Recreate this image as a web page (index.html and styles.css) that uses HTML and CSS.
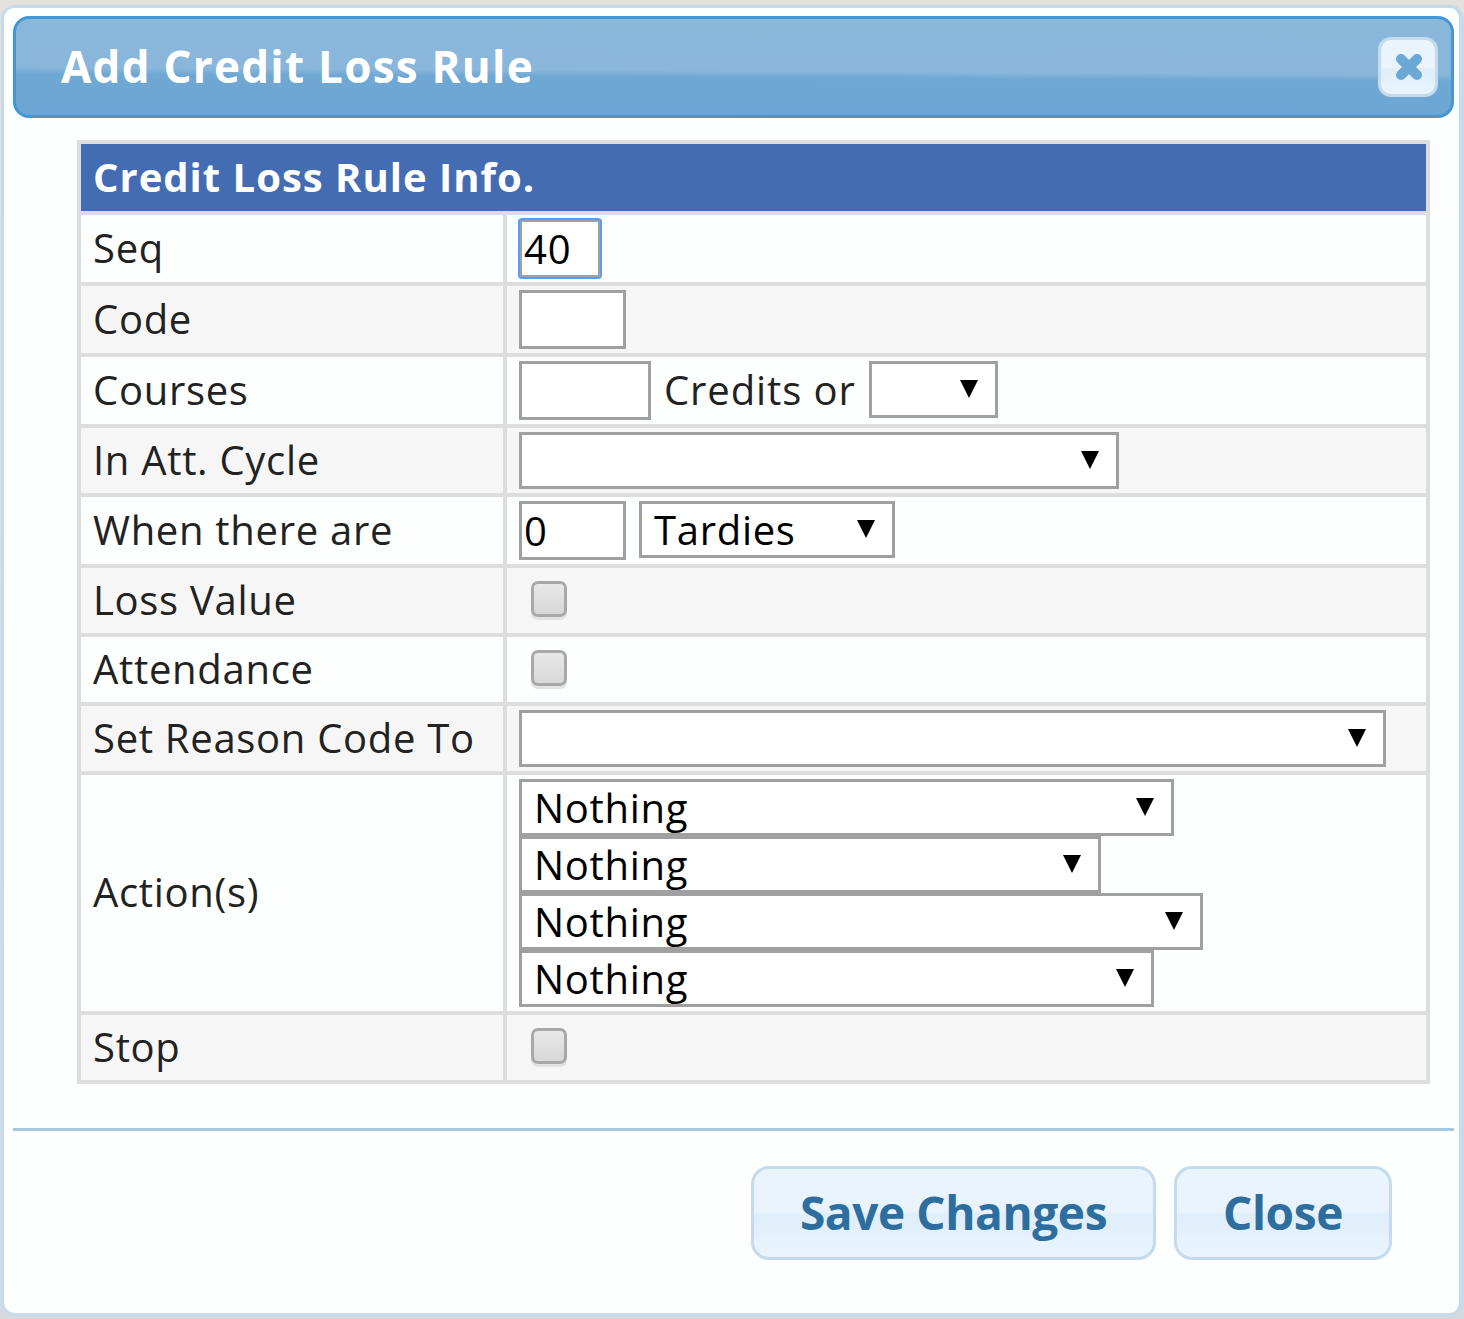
FILE: index.html
```html
<!DOCTYPE html>
<html lang="en">
<head>
    <meta charset="UTF-8">
    <meta name="viewport" content="width=device-width, initial-scale=1.0">
    <title>Add Credit Loss Rule</title>
    <link rel="stylesheet" href="styles.css">
</head>
<body>
    <div class="dialog">
        <header class="titlebar">
            <h1>Add Credit Loss Rule</h1>
            <button class="close-x" aria-label="Close">
                <svg viewBox="0 0 30 30" width="30" height="30">
                    <path d="M7 7 L23 23 M23 7 L7 23" stroke="#6ba8d6" stroke-width="10" stroke-linecap="round"/>
                </svg>
            </button>
        </header>
        <main class="content">
            <table class="rule-table">
                <thead>
                    <tr><th colspan="2">Credit Loss Rule Info.</th></tr>
                </thead>
                <tbody>
                    <tr class="row-tall">
                        <td class="label">Seq</td>
                        <td><input class="field focused w-seq" type="text" value="40"></td>
                    </tr>
                    <tr class="row-tall">
                        <td class="label">Code</td>
                        <td><input class="field w-code" type="text"></td>
                    </tr>
                    <tr class="row-tall">
                        <td class="label">Courses</td>
                        <td>
                            <div class="inline">
                                <input class="field w-courses" type="text">
                                <span class="inline-text">Credits or</span>
                                <select class="pick w-credits"><option></option></select>
                            </div>
                        </td>
                    </tr>
                    <tr class="row-short">
                        <td class="label">In Att. Cycle</td>
                        <td><select class="pick w-cycle"><option></option></select></td>
                    </tr>
                    <tr class="row-tall">
                        <td class="label">When there are</td>
                        <td>
                            <div class="inline">
                                <input class="field w-code" type="text" value="0">
                                <select class="pick w-tardies"><option>Tardies</option></select>
                            </div>
                        </td>
                    </tr>
                    <tr class="row-short">
                        <td class="label">Loss Value</td>
                        <td><span class="check"></span></td>
                    </tr>
                    <tr class="row-short">
                        <td class="label">Attendance</td>
                        <td><span class="check"></span></td>
                    </tr>
                    <tr class="row-short">
                        <td class="label">Set Reason Code To</td>
                        <td><select class="pick w-reason"><option></option></select></td>
                    </tr>
                    <tr class="row-actions">
                        <td class="label">Action(s)</td>
                        <td class="actions">
                            <select class="pick w-act1"><option>Nothing</option></select>
                            <select class="pick w-act2"><option>Nothing</option></select>
                            <select class="pick w-act3"><option>Nothing</option></select>
                            <select class="pick w-act4"><option>Nothing</option></select>
                        </td>
                    </tr>
                    <tr class="row-short">
                        <td class="label">Stop</td>
                        <td><span class="check"></span></td>
                    </tr>
                </tbody>
            </table>
        </main>
        <footer class="buttons">
            <button class="btn w-save">Save Changes</button>
            <button class="btn w-close">Close</button>
        </footer>
    </div>
</body>
</html>
```

FILE: styles.css
```css
html, body {
    margin: 0;
    padding: 0;
}
body {
    font-family: "Open Sans", "Noto Sans", sans-serif;
    color: #222;
    height: 1319px;
    overflow: hidden;
    background: linear-gradient(#e4e1dc, #d5dade);
    padding: 5px 0 0 1px;
    box-sizing: border-box;
}
.dialog {
    box-sizing: border-box;
    height: 1311px;
    border: 3px solid #c5dbec;
    border-right-width: 5px;
    border-radius: 14px;
    background: #fdfefe;
    padding: 8px 5px 0 9px;
}
.titlebar {
    box-sizing: border-box;
    height: 102px;
    display: flex;
    align-items: center;
    justify-content: space-between;
    padding: 0 13px 0 45px;
    border: 3px solid #4297d7;
    border-radius: 16px;
    background: linear-gradient(180.3deg, #8ab8db 0%, #89b6da 54%, #70a8d4 60%, #6ca5d3 100%);
}
.titlebar h1 {
    margin: -2px 0 0;
    color: white;
    font-size: 44px;
    font-weight: 700;
    letter-spacing: 1.25px;
}
.close-x {
    box-sizing: border-box;
    width: 60px;
    height: 60px;
    padding: 0 0 0 2px;
    display: flex;
    align-items: center;
    justify-content: center;
    border: 3px solid #c5dbec;
    border-radius: 13px;
    background: linear-gradient(#eaf4fd 50%, #dfeefb 55%, #eaf4fd 100%);
}
.content {
    padding: 22px 24px 0 64px;
}
.rule-table {
    width: 1353px;
    border-collapse: collapse;
    border: 4px solid #ddd;
    font-size: 40px;
    letter-spacing: 0.7px;
}
.rule-table th {
    box-sizing: border-box;
    height: 71px;
    padding: 0 12px 2px;
    text-align: left;
    color: white;
    font-weight: 700;
    letter-spacing: 1px;
    background: #446cb3;
    border: 4px solid #ddd;
}
.rule-table td {
    box-sizing: border-box;
    height: 70px;
    padding: 0 12px;
    line-height: 1.2;
    border: 4px solid #ddd;
}
.rule-table td.label {
    width: 426px;
    padding-bottom: 2px;
}
.rule-table .row-tall td {
    height: 71px;
}
.rule-table .row-short td {
    height: 69px;
}
.rule-table .row-actions td {
    height: 240px;
}
.rule-table tbody tr:nth-child(even) td {
    background: #f6f6f6;
}
.inline {
    display: flex;
    align-items: flex-start;
    gap: 13px;
}
.inline-text {
    align-self: center;
    letter-spacing: 0.9px;
    padding-bottom: 2px;
}
.field, .pick {
    display: block;
    box-sizing: border-box;
    border: 3px solid #a0a0a0;
    border-radius: 0;
    background-color: white;
    color: black;
    font-family: inherit;
    font-size: 40px;
    margin: 0;
}
.field {
    height: 59px;
    padding: 0 2px;
    letter-spacing: 1px;
}
.field.focused {
    outline: 2px solid #5a9bff;
    outline-offset: -1px;
    border-radius: 3px;
}
.pick {
    height: 57px;
    padding: 0 12px;
    line-height: 51px;
    letter-spacing: 0.7px;
    appearance: none;
    background-image: url("data:image/svg+xml,%3Csvg xmlns='http://www.w3.org/2000/svg' width='18' height='18'%3E%3Cpath d='M0 0H18L9 18Z'/%3E%3C/svg%3E");
    background-repeat: no-repeat;
    background-position: right 17px top 16px;
}
.w-seq { width: 82px; }
.w-code { width: 107px; }
.w-courses { width: 132px; }
.w-credits { width: 129px; }
.w-cycle { width: 600px; }
.w-tardies { width: 256px; }
.w-reason { width: 867px; }
.w-act1 { width: 655px; }
.w-act2 { width: 582px; }
.w-act3 { width: 684px; }
.w-act4 { width: 635px; }
.check {
    display: block;
    box-sizing: border-box;
    width: 36px;
    height: 36px;
    margin: 0 0 3px 12px;
    border: 3px solid #a8a8a8;
    border-radius: 7px;
    background: linear-gradient(#e8e8e8, #d8d8d8);
    box-shadow: 0 3px 0 #e2e2e2;
}
.buttons {
    margin-top: 44px;
    border-top: 3px solid #a6c9e2;
    display: flex;
    justify-content: flex-end;
    gap: 18px;
    padding: 35px 62px 0 0;
}
.btn {
    box-sizing: border-box;
    height: 94px;
    padding: 0 0 3px;
    border: 3px solid #c5dbec;
    border-radius: 18px;
    background: linear-gradient(#eaf4fd 0%, #e8f3fd 48%, #dfeefb 52%, #eaf4fd 100%);
    color: #2e6e9e;
    font-family: inherit;
    font-size: 46px;
    font-weight: 700;
    letter-spacing: -0.4px;
}
.w-save { width: 405px; }
.w-close { width: 218px; }
```
